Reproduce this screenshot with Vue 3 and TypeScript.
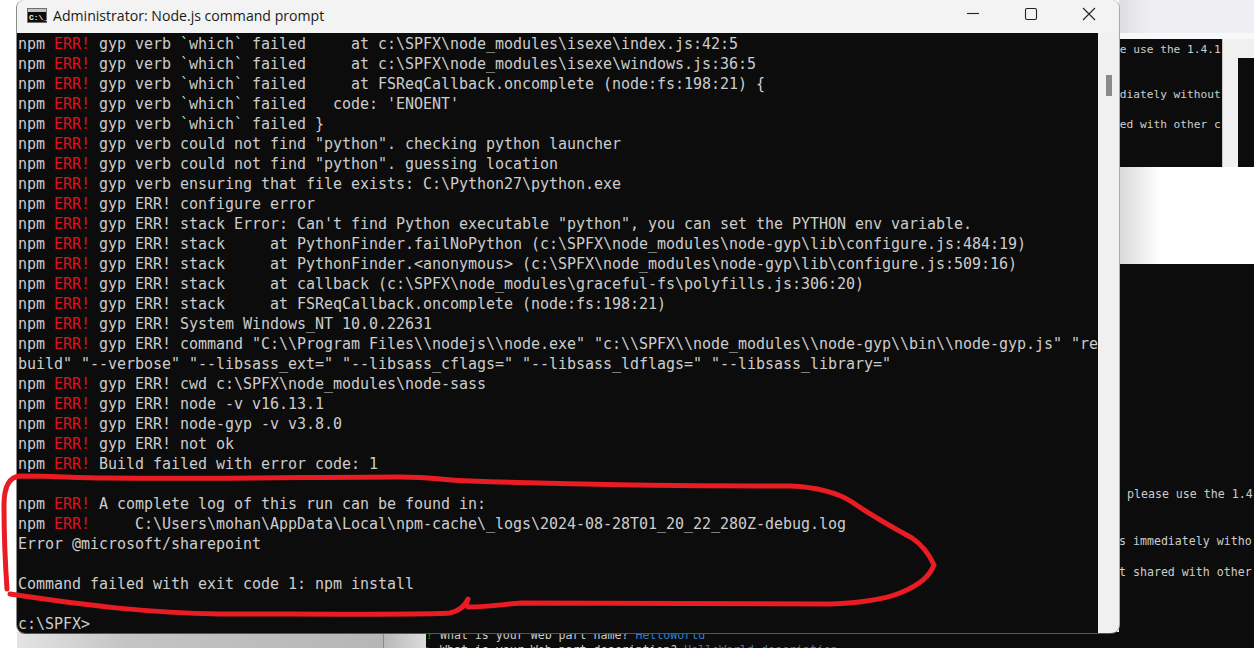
<script setup lang="ts">
interface Line { err: boolean; text: string }
const raw: string[] = [
  'E gyp verb `which` failed     at c:\\SPFX\\node_modules\\isexe\\index.js:42:5',
  'E gyp verb `which` failed     at c:\\SPFX\\node_modules\\isexe\\windows.js:36:5',
  'E gyp verb `which` failed     at FSReqCallback.oncomplete (node:fs:198:21) {',
  "E gyp verb `which` failed   code: 'ENOENT'",
  'E gyp verb `which` failed }',
  'E gyp verb could not find "python". checking python launcher',
  'E gyp verb could not find "python". guessing location',
  'E gyp verb ensuring that file exists: C:\\Python27\\python.exe',
  'E gyp ERR! configure error',
  'E gyp ERR! stack Error: Can\'t find Python executable "python", you can set the PYTHON env variable.',
  'E gyp ERR! stack     at PythonFinder.failNoPython (c:\\SPFX\\node_modules\\node-gyp\\lib\\configure.js:484:19)',
  'E gyp ERR! stack     at PythonFinder.<anonymous> (c:\\SPFX\\node_modules\\node-gyp\\lib\\configure.js:509:16)',
  'E gyp ERR! stack     at callback (c:\\SPFX\\node_modules\\graceful-fs\\polyfills.js:306:20)',
  'E gyp ERR! stack     at FSReqCallback.oncomplete (node:fs:198:21)',
  'E gyp ERR! System Windows_NT 10.0.22631',
  'E gyp ERR! command "C:\\\\Program Files\\\\nodejs\\\\node.exe" "c:\\\\SPFX\\\\node_modules\\\\node-gyp\\\\bin\\\\node-gyp.js" "re',
  'Rbuild" "--verbose" "--libsass_ext=" "--libsass_cflags=" "--libsass_ldflags=" "--libsass_library="',
  'E gyp ERR! cwd c:\\SPFX\\node_modules\\node-sass',
  'E gyp ERR! node -v v16.13.1',
  'E gyp ERR! node-gyp -v v3.8.0',
  'E gyp ERR! not ok',
  'E Build failed with error code: 1',
  'R ',
  'E A complete log of this run can be found in:',
  'E     C:\\Users\\mohan\\AppData\\Local\\npm-cache\\_logs\\2024-08-28T01_20_22_280Z-debug.log',
  'RError @microsoft/sharepoint',
  'R ',
  'RCommand failed with exit code 1: npm install',
  'R ',
  'Rc:\\SPFX>'
]
const lines: Line[] = raw.map((r) => ({ err: r[0] === 'E', text: r.slice(1) }))
</script>

<template>
  <div class="desktop">
    <div class="back-top">
      <div class="back-top-bar"></div>
      <div class="back-top-body">
        <div class="back-term">
          <div class="bt-line l1">se use the 1.4.1</div>
          <div class="bt-line l2">ediately without</div>
          <div class="bt-line l3">red with other c</div>
        </div>
        <div class="back-scroll"></div>
        <div class="back-next"><div class="back-next-head"></div></div>
      </div>
    </div>
    <div class="back-white"></div>
    <div class="back-low">
      <div class="bl-line b1">please use the 1.4</div>
      <div class="bl-line b2">s immediately witho</div>
      <div class="bl-line b3">t shared with other</div>
    </div>
    <div class="back-strip"></div>
    <div class="back-prompt">
      <div class="bp-line first"><span class="green">?</span> What is your Web part name? <span class="blue">HelloWorld</span></div>
      <div class="bp-line"><span class="green">&gt;</span> What is your Web part description? <span class="blue">HelloWorld description</span></div>
    </div>

    <div class="win">
      <div class="title">
        <svg class="cmd" width="20" height="15" viewBox="0 0 20 15">
          <rect x="0" y="0" width="20" height="15" fill="#6f6f6f" />
          <rect x="1" y="1" width="18" height="3" fill="#c4c4c4" />
          <rect x="1" y="4" width="18" height="10" fill="#0c0c0c" />
          <text x="2" y="12" font-size="8" font-weight="700" font-family="Liberation Mono, monospace" fill="#f0f0f0">C:\_</text>
        </svg>
        <span class="title-text">Administrator: Node.js command prompt</span>
        <div class="controls">
          <svg width="14" height="14" viewBox="0 0 14 14"><path d="M1 6.5h12" stroke="#222" stroke-width="1.1" fill="none" /></svg>
          <svg width="14" height="14" viewBox="0 0 14 14"><rect x="1.5" y="1.5" width="11" height="11" rx="1.5" stroke="#222" stroke-width="1.1" fill="none" /></svg>
          <svg width="14" height="14" viewBox="0 0 14 14"><path d="M1 1l12 12M13 1L1 13" stroke="#222" stroke-width="1.1" fill="none" /></svg>
        </div>
      </div>
      <div class="content">
        <div class="term">
          <div v-for="(l, i) in lines" :key="i" class="line"><template v-if="l.err">npm <span class="err">ERR!</span></template>{{ l.text }}</div>
        </div>
        <div class="scrollbar"><div class="thumb"></div></div>
      </div>
    </div>

    <svg class="ink" width="1254" height="648" viewBox="0 0 1254 648">
      <path d="M7 589 C5 560 4 530 4 505 C4 488 8 477 20 476 C60 476 70 478 110 478 C200 479 330 477 400 477 C430 477 445 480 470 481 C560 484 700 486 790 486 C815 487 835 491 852 502 C872 516 890 526 912 538 C924 546 930 556 934 565 C930 575 922 584 900 593 C885 599 860 603 830 604 C720 604 620 603 521 603 C505 604 490 607 468 607 L466 604 L468 599 C466 604 462 610 450 613 C420 615 300 614 220 614 C150 613 90 606 10 594" stroke="#e81c22" stroke-width="5" fill="none" stroke-linecap="round" stroke-linejoin="round" />
    </svg>
  </div>
</template>

<style>
html, body { margin: 0; padding: 0; background: #fff; overflow: hidden; }
</style>

<style scoped>
.desktop {
  position: relative;
  width: 1254px;
  height: 648px;
  overflow: hidden;
  background: #fff;
  font-family: "DejaVu Sans Mono", "Liberation Mono", monospace;
}
.back-top {
  position: absolute;
  left: 1119px;
  top: 0;
  width: 135px;
  height: 167px;
  display: flex;
  flex-direction: column;
  background: #f0f0f0;
}
.back-top-bar {
  height: 33px;
  flex: none;
  background: linear-gradient(90deg, #dddde2 0, #eeeef3 30px);
  border-bottom: 6px solid #f8f8fa;
}
.back-top-body { flex: 1; display: flex; min-height: 0; }
.back-term { width: 103px; background: #0c0c0c; position: relative; overflow: hidden; }
.bt-line, .bl-line {
  position: absolute;
  white-space: pre;
  color: #ccc;
  line-height: 14px;
}
.bt-line { font-size: 11.2px; left: -6px; }
.bl-line { font-size: 11.6px; }
.l1 { top: 4px; }
.l2 { top: 49px; }
.l3 { top: 79px; }
.back-scroll { width: 16px; flex: none; background: #f0f0f0; border-left: 1px solid #c8c8c8; box-sizing: border-box; }
.back-next { flex: 1; background: #0c0c0c; }
.back-next-head { height: 19px; background: #f0f0f0; }
.back-white {
  position: absolute;
  left: 1119px;
  top: 167px;
  width: 135px;
  height: 97px;
  background: linear-gradient(90deg, #d8d8d8 0, #f4f4f4 30px, #fff 42px);
}
.back-low {
  position: absolute;
  left: 1119px;
  top: 264px;
  width: 135px;
  height: 384px;
  background: #0c0c0c;
  overflow: hidden;
}
.b1 { top: 223px; left: 8px; }
.b2 { top: 270px; left: 0; }
.b3 { top: 301px; left: 0; }
.back-strip {
  position: absolute;
  left: 17px;
  top: 632px;
  width: 409px;
  height: 16px;
  background: linear-gradient(90deg, #e4e4e4 0, #c4c4c4 110px, #b6b6b6 366px, #8a8a8a 366px, #8a8a8a 367px, #b8b8b8 367px, #dcdcdc 409px);
}
.back-prompt {
  position: absolute;
  left: 426px;
  top: 632px;
  width: 693px;
  height: 16px;
  overflow: hidden;
  background: #0c0c0c;
}
.bp-line {
  font-size: 11.6px;
  line-height: 15px;
  color: #ccc;
  white-space: pre;
}
.first { margin-top: -4px; }
.green { color: #13a10e; }
.blue { color: #2f7fc4; }
.win {
  position: absolute;
  left: 17px;
  top: 0;
  width: 1102px;
  height: 633px;
  display: flex;
  flex-direction: column;
  border-radius: 8px;
  overflow: hidden;
  box-shadow: 1px 0 0 #a8a8a8, 0 1px 0 #555, -1px 0 0 #8a8a8a;
}
.title {
  height: 33px;
  flex: none;
  box-sizing: border-box;
  padding: 0 0 3px 10px;
  background: #f3f3f3;
  display: flex;
  align-items: center;
}
.cmd { flex: none; }
.title-text {
  margin-left: 6px;
  font-family: "Open Sans", "Noto Sans", sans-serif;
  font-size: 14.1px;
  color: #1a1a1a;
  white-space: nowrap;
}
.controls {
  margin-left: auto;
  margin-right: 23px;
  margin-bottom: 2px;
  display: flex;
  gap: 44px;
}
.content { flex: 1; display: flex; min-height: 0; }
.term {
  width: 1081px;
  flex: none;
  box-sizing: border-box;
  background: #0c0c0c;
  padding-top: 1px;
  overflow: hidden;
}
.line {
  height: 20px;
  line-height: 20px;
  font-size: 15px;
  letter-spacing: -0.03px;
  color: #ccc;
  white-space: pre;
  padding-left: 1px;
}
.err { color: #e0101e; }
.scrollbar { flex: 1; background: #f0f0f0; position: relative; }
.thumb {
  position: absolute;
  left: 8px;
  top: 42px;
  width: 6px;
  height: 21px;
  background: #8a8a8a;
}
.ink {
  position: absolute;
  left: 0;
  top: 0;
  pointer-events: none;
}
</style>
